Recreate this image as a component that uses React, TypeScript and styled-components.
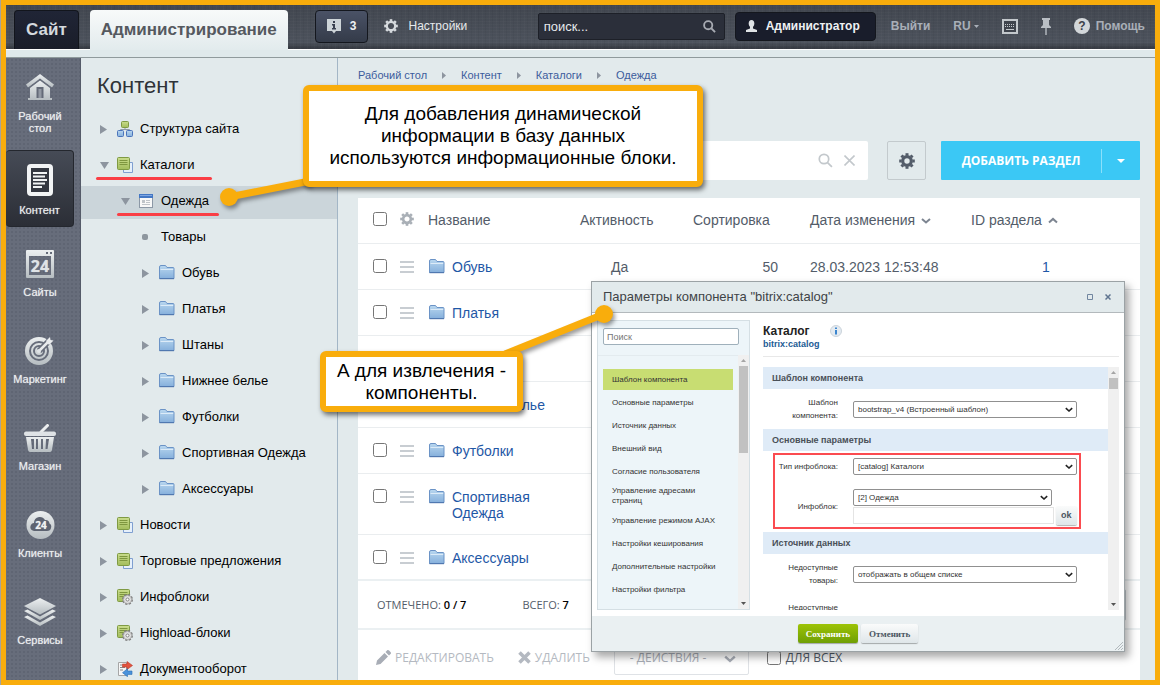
import React from "react";
import styled, { createGlobalStyle, css } from "styled-components";

const orange = "#f9ad0c";

const GlobalStyle = createGlobalStyle`
  * { box-sizing: border-box; }
  body { margin: 0; font-family: "Liberation Sans", Arial, sans-serif; color: #000; }
  button, input, select { font-family: inherit; margin: 0; }
  a { text-decoration: none; color: inherit; }
  ul { list-style: none; margin: 0; padding: 0; }
  svg { display: block; flex: none; }
`;

const Screen = styled.div`
  border-left: 1px solid #a7a49b;
`;

const Frame = styled.div`
  position: relative;
  display: flex;
  flex-direction: column;
  height: 100vh;
  overflow: hidden;
  border: 5px solid ${orange};
  background: #e2eaec;
`;

/* ---------- top bar ---------- */

const TopBar = styled.header`
  display: flex;
  align-items: center;
  flex: none;
  height: 44px;
  padding: 0 10px 2px 8px;
  font-size: 12px;
  color: #e6e9ec;
  background:
    repeating-linear-gradient(90deg, rgba(255, 255, 255, 0.02) 0 1px, transparent 1px 3px, rgba(0, 0, 0, 0.04) 3px 4px, transparent 4px 7px),
    repeating-linear-gradient(0deg, rgba(255, 255, 255, 0.02) 0 1px, transparent 1px 3px),
    linear-gradient(#41464f, #4c525c 85%, #33373f);
`;

const Tab = styled.a<{ $active?: boolean }>`
  position: relative;
  z-index: 1;
  display: flex;
  align-items: center;
  justify-content: center;
  align-self: flex-end;
  height: 39px;
  padding: 0 11px;
  font-size: 17px;
  font-weight: bold;
  border-radius: 4px 4px 0 0;
  margin-bottom: -2px;
  ${(p) =>
    p.$active
      ? css`
          height: 40px;
          margin-bottom: -3px;
          margin-left: 11px;
          margin-right: 27px;
          color: #55595f;
          background: linear-gradient(#f8fafa, #e2ebed);
        `
      : css`
          color: #d5dade;
          border: 1px solid #12151c;
          border-bottom: 0;
          background: linear-gradient(#202536, #1a1d29);
        `}
`;

const BarButton = styled.button<{ $dark?: boolean }>`
  display: flex;
  align-items: center;
  justify-content: center;
  gap: 9px;
  height: ${(p) => (p.$dark ? 29 : 33)}px;
  padding: 0 ${(p) => (p.$dark ? 15 : 11)}px 0 ${(p) => (p.$dark ? 10 : 11)}px;
  font-size: 12px;
  font-weight: bold;
  color: #eef1f3;
  border: 1px solid #14171e;
  border-radius: 4px;
  background: ${(p) => (p.$dark ? "#191d2b" : "linear-gradient(#4a5266, #343b49)")};
`;

const BarLink = styled.a<{ $strong?: boolean; $gap?: number }>`
  display: flex;
  align-items: center;
  gap: ${(p) => p.$gap || 0}px;
  font-weight: ${(p) => (p.$strong ? "bold" : "normal")};
  color: ${(p) => (p.$strong ? "#a9afb8" : "#e6e9ec")};
`;

const SettingsLink = styled(BarLink)`
  margin-left: 16px;
  margin-right: auto;
`;

const GlobalSearch = styled.label`
  display: flex;
  align-items: center;
  width: 187px;
  height: 27px;
  margin-right: 10px;
  padding: 0 8px 0 5px;
  border: 1px solid #1d2028;
  border-radius: 2px;
  background: #2b2f3a;
  input {
    flex: 1;
    min-width: 0;
    padding: 0;
    border: 0;
    outline: 0;
    background: none;
    font-size: 13px;
    color: #e6e9ec;
  }
  input::placeholder { color: #e6e9ec; opacity: 1; }
`;

const BarTools = styled.nav`
  display: flex;
  align-items: center;
  gap: 23px;
  margin-left: 15px;
`;

const Strip = styled.div`
  flex: none;
  height: 9px;
  border-top: 1px solid #fff;
  border-bottom: 1px solid #8f9a9c;
  background: #dfe9eb;
`;

/* ---------- page body ---------- */

const Body = styled.div`
  display: flex;
  flex: 1;
  min-height: 0;
`;

const Rail = styled.nav`
  display: flex;
  flex-direction: column;
  gap: 9px;
  flex: none;
  width: 75px;
  padding: 2px 6px 0 0;
  border-right: 1px solid #555b69;
  background-color: #676d7b;
  background-image: radial-gradient(#5f6573 1px, transparent 1px);
  background-size: 4px 4px;
`;

const RailItem = styled.a<{ $active?: boolean }>`
  display: flex;
  flex-direction: column;
  align-items: center;
  flex: none;
  gap: 8px;
  min-height: 78px;
  padding-top: 14px;
  font-size: 11px;
  line-height: 12px;
  text-align: center;
  color: #eceef0;
  text-shadow: 0 0 1px rgba(255, 255, 255, 0.6);
  &:first-child { min-height: 81px; padding: 14px 14px 2px; }
  ${(p) =>
    p.$active &&
    css`
      min-height: 77px;
      border: 1px solid #24272e;
      border-left: 0;
      border-radius: 4px;
      padding-top: 13px;
      background: linear-gradient(#464b56, #2b2e36);
    `}
`;

const TreePanel = styled.aside`
  flex: none;
  width: 257px;
  border-right: 1px solid #a3b6c6;
`;

const TreeTitle = styled.h1`
  margin: 0;
  padding: 15px 16px 12px;
  font-size: 22px;
  line-height: 26px;
  font-weight: normal;
  color: #2f3338;
`;

const TreeRow = styled.li<{ $level: number; $active?: boolean }>`
  position: relative;
  display: flex;
  align-items: center;
  height: 33px;
  margin-top: 3px;
  padding-left: ${(p) => 19 + 21 * p.$level}px;
  padding-bottom: 5px;
  font-size: 13px;
  background: ${(p) => (p.$active ? "#cbd5da" : "none")};
`;

const TreeToggle = styled.span<{ $bullet?: boolean }>`
  display: flex;
  width: 7px;
  margin-right: ${(p) => (p.$bullet ? 12 : 10)}px;
  padding-top: 2px;
`;

const TreeIcon = styled.span`
  display: flex;
  width: 16px;
  margin-right: 7px;
  padding-top: 1px;
`;

const Underline = styled.span<{ $left: number; $width: number }>`
  position: absolute;
  left: ${(p) => p.$left}px;
  bottom: 3px;
  width: ${(p) => p.$width}px;
  height: 3px;
  border-radius: 2px;
  background: #fa3e45;
`;

const Main = styled.main`
  flex: 1;
  min-width: 0;
  padding: 0 15px 0 20px;
`;

const Crumbs = styled.nav`
  display: flex;
  align-items: center;
  gap: 15px;
  padding: 11px 0 0;
  font-size: 11px;
  line-height: 13px;
  color: #3c5c9c;
`;

const Toolbar = styled.div`
  display: flex;
  height: 39px;
  margin: 59px 0 18px;
`;

const Filter = styled.label`
  display: flex;
  align-items: center;
  gap: 11px;
  flex: 1;
  min-width: 0;
  padding-right: 13px;
  border-radius: 2px;
  background: #fff;
  input {
    flex: 1;
    min-width: 0;
    border: 0;
    outline: 0;
    background: none;
  }
`;

const GearButton = styled.button`
  display: flex;
  align-items: center;
  justify-content: center;
  width: 39px;
  margin: 0 15px 0 19px;
  padding: 0;
  border: 1px solid #c3cacd;
  border-radius: 2px;
  background: none;
`;

const AddGroup = styled.div`
  display: flex;
  align-items: center;
  width: 199px;
  border-radius: 1px;
  background: #3bc8f5;
`;

const AddButton = styled.button<{ $narrow?: boolean }>`
  display: flex;
  align-items: center;
  justify-content: center;
  flex: ${(p) => (p.$narrow ? "0 0 39px" : 1)};
  height: 24px;
  padding: 0;
  border: 0;
  border-left: ${(p) => (p.$narrow ? "1px solid #8be0fa" : "0")};
  background: none;
  font: bold 12px "Open Sans", sans-serif;
  color: #fff;
  white-space: nowrap;
`;

const Grid = styled.section`
  background: #fff;
  min-height: 100%;
`;

const Table = styled.table`
  width: 100%;
  table-layout: fixed;
  border-collapse: collapse;
  font-size: 14px;
  line-height: 16px;
  color: #535c69;
  th, td {
    height: 46px;
    padding: 0;
    text-align: left;
    font-weight: normal;
    vertical-align: top;
    border-bottom: 1px solid #eaedef;
  }
  th { height: 45px; }
  tbody tr:last-child td { border-bottom: 2px solid #ebf0f2; }
`;

const Cell = styled.div<{ $left?: number; $right?: boolean }>`
  display: flex;
  align-items: flex-start;
  justify-content: ${(p) => (p.$right ? "flex-end" : "flex-start")};
  gap: 6px;
  padding: 15px 0 13px ${(p) => p.$left || 0}px;
  padding-right: ${(p) => (p.$right ? 32 : 0)}px;
  white-space: nowrap;
`;

const HeadCell = styled(Cell)`
  align-items: center;
  padding-top: 14px;
  padding-bottom: 12px;
`;

const CellLink = styled.a`
  color: #1f58a6;
`;

const NameLink = styled(CellLink)`
  display: flex;
  gap: 7px;
  padding-left: 1px;
  white-space: normal;
`;

const Check = styled.input`
  width: 14px;
  height: 14px;
  margin: 0;
  flex: none;
`;

const Handle = styled.span`
  width: 14px;
  height: 12px;
  margin-top: 2px;
  border-top: 2px solid #c8cdd2;
  border-bottom: 2px solid #c8cdd2;
  background: linear-gradient(transparent 3px, #c8cdd2 3px 5px, transparent 5px);
`;

const Summary = styled.div`
  display: flex;
  align-items: center;
  gap: 56px;
  height: 49px;
  padding: 0 14px 0 19px;
  border-bottom: 2px solid #ebf0f2;
  font: 11px "Open Sans", sans-serif;
  color: #535c69;
  b { font-weight: 600; color: #000; }
`;

const PageSize = styled.select`
  width: 60px;
  height: 32px;
  margin-left: auto;
  border: 1px solid #c6cdd3;
  border-radius: 2px;
  background: #fff;
`;

const Actions = styled.div`
  display: flex;
  align-items: center;
  height: 55px;
  padding-left: 18px;
  font: 12px "Open Sans", sans-serif;
  color: #535c69;
`;

const ActionButton = styled.button`
  display: flex;
  align-items: center;
  gap: 4px;
  margin-right: 24px;
  padding: 0;
  border: 0;
  background: none;
  font: inherit;
  color: #b4b9c1;
`;

const ActionSelect = styled.span`
  display: flex;
  align-items: center;
  width: 135px;
  height: 34px;
  margin-right: 18px;
  padding: 0 12px 0 15px;
  border: 1px solid #dfe2e6;
  border-radius: 2px;
  select {
    flex: 1;
    appearance: none;
    padding: 0;
    border: 0;
    background: none;
    font: 12px "Open Sans", sans-serif;
    color: #a8adb6;
  }
`;

const AllLabel = styled.label`
  display: flex;
  align-items: center;
  gap: 5px;
`;

/* ---------- component dialog ---------- */

const Dialog = styled.section`
  position: absolute;
  left: 585px;
  top: 276px;
  display: flex;
  flex-direction: column;
  width: 534px;
  height: 371px;
  border: 1px solid #9ba2a5;
  background: #fff;
  box-shadow: 4px 5px 8px rgba(0, 0, 0, 0.35);
  font-size: 8px;
  color: #333;
`;

const DialogHead = styled.header`
  display: flex;
  align-items: center;
  gap: 12px;
  height: 31px;
  padding: 0 13px 2px 11px;
  border-bottom: 1px solid #b3b9bc;
  background: #e2eaec;
  h2 {
    flex: 1;
    margin: 0;
    font-size: 13px;
    font-weight: normal;
    color: #3f4447;
  }
  button {
    padding: 2px 0 0;
    border: 0;
    background: none;
  }
`;

const DialogBody = styled.div`
  display: flex;
  gap: 13px;
  flex: 1;
  min-height: 0;
  padding: 7px 5px 6px;
`;

const Side = styled.div`
  display: flex;
  flex-direction: column;
  width: 153px;
  border: 1px solid #d5dfe4;
  background: #edf5f9;
`;

const SideSearch = styled.input`
  width: 136px;
  height: 17px;
  margin: 7px 5px 10px;
  padding: 0 3px;
  border: 1px solid #9fb0bb;
  border-radius: 2px;
  background: #fff;
  font-size: 9px;
`;

const Scroller = styled.div`
  display: flex;
  flex: 1;
  min-height: 0;
`;

const Clip = styled.div`
  flex: 1;
  min-width: 0;
  overflow: hidden;
`;

const SideList = styled.ul`
  flex: 1;
  overflow: hidden;
  padding: 13px 5px 0 5px;
  border-top: 1px solid #e3ebef;
`;

const SideItem = styled.li<{ $active?: boolean }>`
  display: flex;
  align-items: center;
  min-height: 21px;
  margin: 0 0 2px;
  padding: 2px 12px 2px 9px;
  line-height: 10px;
  background: ${(p) => (p.$active ? "#c8dd72" : "none")};
`;

const ScrollTrack = styled.div<{ $thumb: number }>`
  display: flex;
  flex-direction: column;
  align-items: center;
  gap: 4px;
  width: 11px;
  padding: 4px 0;
  background: #f0f0f0;
  i {
    width: 9px;
    height: ${(p) => p.$thumb}px;
    background: #c1c1c1;
  }
  svg:last-child { margin-top: auto; }
`;

const Form = styled.div`
  display: flex;
  flex-direction: column;
  flex: 1;
  min-width: 0;
`;

const FormHead = styled.div`
  height: 37px;
  margin-bottom: 10px;
  padding-top: 4px;
  border-bottom: 1px solid #e8e8e8;
  div {
    display: flex;
    align-items: center;
    gap: 20px;
  }
  h3 {
    margin: 0;
    font-size: 12px;
    line-height: 14px;
    color: #222;
  }
  a {
    display: block;
    font-size: 9px;
    line-height: 12px;
    font-weight: bold;
    color: #1b5b95;
  }
`;

const FormSection = styled.h4`
  margin: 0;
  padding-left: 9px;
  font-size: 9px;
  line-height: 22px;
  color: #4a5058;
  background: #dfebf7;
`;

const Field = styled.div<{ $height: number }>`
  display: grid;
  grid-template-columns: 75px 1fr;
  column-gap: 15px;
  align-items: center;
  height: ${(p) => p.$height}px;
  label {
    justify-self: end;
    text-align: right;
    line-height: 13px;
  }
`;

const SelectBox = styled.span<{ $short?: boolean }>`
  display: flex;
  align-items: center;
  width: ${(p) => (p.$short ? 199 : 224)}px;
  height: 17px;
  padding: 0 3px 0 4px;
  border: 1px solid #909090;
  border-radius: 2px;
  select {
    flex: 1;
    appearance: none;
    padding: 0;
    border: 0;
    background: none;
    font-size: 8px;
    color: #333;
  }
`;

const Marked = styled.div`
  position: relative;
`;

const RedFrame = styled.span`
  position: absolute;
  inset: 2px 27px 3px 10px;
  border: 2px solid #fb4b50;
  pointer-events: none;
`;

const CodeRow = styled.div`
  display: flex;
  align-items: center;
  gap: 2px;
  height: 19px;
  input {
    width: 201px;
    height: 17px;
    border: 1px solid #e4e4e4;
    background: #fff;
  }
`;

const SmallButton = styled.button<{ $kind?: "save" | "cancel" }>`
  height: 19px;
  padding: 0 ${(p) => (p.$kind ? 8 : 5)}px;
  border: 0;
  border-radius: 2px;
  box-shadow: 0 1px 1px rgba(0, 0, 0, 0.3);
  font-family: ${(p) => (p.$kind ? '"Liberation Serif", serif' : "inherit")};
  font-size: 9px;
  font-weight: bold;
  color: ${(p) => (p.$kind === "save" ? "#fff" : "#4a5560")};
  background: ${(p) => (p.$kind === "save" ? "linear-gradient(#9dc306, #6f9f04)" : "linear-gradient(#fafbfb, #dfe6e9)")};
`;

const DialogFoot = styled.footer`
  position: relative;
  display: flex;
  align-items: center;
  justify-content: center;
  gap: 3px;
  height: 35px;
  background: #eaf0f2;
  > svg {
    position: absolute;
    right: 1px;
    bottom: 1px;
  }
`;

/* ---------- annotations ---------- */

const Connector = styled.svg`
  position: absolute;
  left: 0;
  top: 0;
  filter: drop-shadow(2px 3px 2px rgba(0, 0, 0, 0.4));
  pointer-events: none;
`;

const Callout = styled.p<{ $x: number; $y: number; $w: number; $h: number }>`
  position: absolute;
  left: ${(p) => p.$x}px;
  top: ${(p) => p.$y}px;
  display: flex;
  align-items: center;
  justify-content: center;
  width: ${(p) => p.$w}px;
  height: ${(p) => p.$h}px;
  margin: 0;
  border: 6px solid ${orange};
  border-radius: 6px;
  background: #fff;
  box-shadow: 2px 3px 5px rgba(0, 0, 0, 0.55);
  font-size: 19px;
  line-height: 22px;
  text-align: center;
  white-space: nowrap;
`;

/* ---------- drawings ---------- */

const HiddenDefs = styled.svg`
  position: absolute;
`;

const Gradients = () => (
  <HiddenDefs width="0" height="0" aria-hidden>
    <defs>
      <linearGradient id="silver" x1="0" y1="0" x2="0" y2="1">
        <stop offset="0" stopColor="#eceff0" />
        <stop offset="1" stopColor="#b6bdc1" />
      </linearGradient>
      <linearGradient id="blue" x1="0" y1="0" x2="0" y2="1">
        <stop offset="0" stopColor="#b9d7ef" />
        <stop offset="1" stopColor="#86b0dc" />
      </linearGradient>
      <linearGradient id="green" x1="0" y1="0" x2="0" y2="1">
        <stop offset="0" stopColor="#c9dc8c" />
        <stop offset="1" stopColor="#a3bd5c" />
      </linearGradient>
    </defs>
  </HiddenDefs>
);

const GearRing = ({ size, color, r = 4.4, stroke = 3 }: { size: number; color: string; r?: number; stroke?: number }) => (
  <svg width={size} height={size} viewBox="-8 -8 16 16" fill="none" stroke={color}>
    <circle r={r} strokeWidth={stroke} />
    {[0, 45, 90, 135, 180, 225, 270, 315].map((a) => (
      <path key={a} d="M0 -5.4V-7.8" strokeWidth="3" transform={`rotate(${a})`} />
    ))}
  </svg>
);

const Magnifier = ({ size, color, stroke = 2 }: { size: number; color: string; stroke?: number }) => (
  <svg width={size} height={size} viewBox="0 0 14 14" fill="none" stroke={color} strokeWidth={stroke}>
    <circle cx="5.6" cy="5.6" r="4.4" />
    <path d="M8.9 8.9L13 13" />
  </svg>
);

const Chevron = ({ up, size = 10, color = "#7d8591", stroke = 2 }: { up?: boolean; size?: number; color?: string; stroke?: number }) => (
  <svg width={size} height={size} viewBox="0 0 10 10" fill="none" stroke={color} strokeWidth={stroke}>
    <path d={up ? "M1 7.5L5 3.9L9 7.5" : "M1 3.9L5 7.5L9 3.9"} />
  </svg>
);

const Triangle = ({ dir, w, h, color }: { dir: "right" | "down" | "up"; w: number; h: number; color: string }) => (
  <svg width={w} height={h} viewBox="0 0 10 10" preserveAspectRatio="none">
    <path fill={color} d={dir === "right" ? "M0 0L10 5L0 10Z" : dir === "down" ? "M0 0H10L5 10Z" : "M0 10H10L5 0Z"} />
  </svg>
);

const Folder = () => (
  <svg width="16" height="15" viewBox="0 0 16 15">
    <path d="M.5 13.5V2Q.5 .5 2 .5H6.5L8 2.5H14Q15 2.5 15 3.5V13.5Z" fill="url(#blue)" stroke="#6b93c6" />
    <path d="M1.5 4.5H14.2" stroke="#dcebf8" />
    <path d="M.5 13.7H15" stroke="#4b72ac" />
  </svg>
);

const Sheets = ({ gear }: { gear?: boolean }) => (
  <svg width="16" height="16" viewBox="0 0 16 16">
    {!gear && <path d="M6.5 5.5H15.5V15.5H6.5Z" fill="#e6f0fb" stroke="#7f9fd0" />}
    <rect x=".5" y=".5" width="12" height="12" rx="1" fill="url(#green)" stroke="#7f9a43" />
    <path d="M2.5 3.5H10.5M2.5 5.5H10.5M2.5 7.5H10.5" stroke="#7e963f" />
    {gear && (
      <g transform="translate(10.5 10.5)">
        <circle r="4.5" fill="#dcdcdc" stroke="#7e7e7e" strokeWidth="2" strokeDasharray="2.2 1.3" />
        <circle r="4" fill="#e2e2e2" stroke="#9a9a9a" strokeWidth=".6" />
        <circle r="1.5" fill="#fff" stroke="#858585" />
      </g>
    )}
  </svg>
);

const SiteMap = () => (
  <svg width="16" height="16" viewBox="0 0 16 16">
    <path d="M8 6V9M3.5 10V8.5H12.5V10" fill="none" stroke="#8f9aa5" />
    <rect x="4.5" y=".5" width="7" height="6" rx="1" fill="url(#green)" stroke="#7f9a43" />
    <rect x=".5" y="9.5" width="6" height="6" rx="1" fill="url(#blue)" stroke="#4b74bb" />
    <rect x="9.5" y="9.5" width="6" height="6" rx="1" fill="url(#blue)" stroke="#4b74bb" />
  </svg>
);

const Card = () => (
  <svg width="16" height="14" viewBox="0 0 16 14">
    <rect x="1.5" y=".5" width="13" height="13" fill="#f8f8f8" stroke="#8c98a6" />
    <path d="M1 0H15V4H1Z" fill="#4377c4" />
    <path d="M2 1.5H14" stroke="#7fa6e2" />
    <path d="M4 6H7V9H4ZM8 6H12V7H8ZM8 8H12V9H8ZM4 10H12V11H4Z" fill="#bfc4c9" />
  </svg>
);

const DocFlow = () => (
  <svg width="16" height="16" viewBox="0 0 16 16">
    <path d="M1.5 1.5H9.5V14.5H1.5Z" fill="#f7f7f7" stroke="#a6a6a6" />
    <path d="M3 4H5M3 6.5H8M3 9H6" stroke="#888" />
    <path d="M5.5 3H10V.5L15.5 4.5L10 8.5V6H5.5Z" fill="#e2543f" stroke="#b93b2b" strokeWidth=".6" />
    <path d="M15 10H10.5V7.8L5.5 11.7L10.5 15.7V13.4H15Z" fill="#4b93dc" stroke="#2c6db2" strokeWidth=".6" />
  </svg>
);

const railIcons: Record<string, React.ReactNode> = {
  home: (
    <svg width="28" height="28" viewBox="0 0 28 28" fill="url(#silver)">
      <path d="M14 0L28 10.5L26 13.5L14 4.5L2 13.5L0 10.5Z" />
      <path fillRule="evenodd" d="M14 6.5L24 14V24H26V26H2V24H4V14ZM11.5 14V24H16.5V14Z" />
      <path d="M10.5 13H17.5V24H10.5Z" fill="#646a78" />
      <path d="M12.5 15H15.5V24H12.5Z" fill="#9298a3" />
    </svg>
  ),
  page: (
    <svg width="26" height="32" viewBox="0 0 26 32">
      <rect x="2" y="2" width="22" height="28" rx="2" fill="#343841" stroke="#f2f4f5" strokeWidth="4" />
      <path d="M6 9H20M6 12.5H18M6 16H20M6 19.5H18M6 23H15" stroke="#f2f4f5" strokeWidth="1.8" />
    </svg>
  ),
  sites: (
    <svg width="28" height="28" viewBox="0 0 28 28">
      <path fillRule="evenodd" fill="url(#silver)" d="M1 0H27Q28 0 28 1V27Q28 28 27 28H1Q0 28 0 27V1Q0 0 1 0ZM3 6V25H25V6ZM20 2V4H22V2ZM24 2V4H26V2Z" />
      <text x="14" y="22" textAnchor="middle" fontFamily="Open Sans, sans-serif" fontWeight="bold" fontSize="16" fill="#dfe3e6">24</text>
    </svg>
  ),
  target: (
    <svg width="30" height="28" viewBox="0 0 30 28">
      <circle cx="14" cy="14" r="14" fill="url(#silver)" />
      <circle cx="14" cy="14" r="9" fill="none" stroke="#676d7b" strokeWidth="2" />
      <circle cx="14" cy="14" r="5" fill="none" stroke="#676d7b" strokeWidth="2" />
      <path d="M14 14L27 1" stroke="#676d7b" strokeWidth="6" />
      <path d="M14 14L25 3" stroke="#e9ebed" strokeWidth="2.5" />
      <path d="M21 4L25 0L25.5 3L28.5 3.5L24 8Z" fill="#e9ebed" />
      <circle cx="14" cy="14" r="2" fill="#e0e3e6" />
    </svg>
  ),
  basket: (
    <svg width="32" height="28" viewBox="0 0 32 28">
      <path d="M23.5 1.5L17 8" stroke="#eceeef" strokeWidth="3" strokeLinecap="round" />
      <rect y="7.5" width="32" height="4.5" rx="2" fill="#dfe3e6" />
      <path fillRule="evenodd" fill="url(#silver)" d="M2 13H30L28 26Q27.5 28 26 28H6Q4.5 28 4 26ZM7 15L8 25H10V15ZM12 15V25H14V15ZM17 15V25H19V15ZM22 15L21.5 25H23.5L25 15Z" />
    </svg>
  ),
  cloud: (
    <svg width="29" height="28" viewBox="0 0 29 28">
      <circle cx="14.5" cy="14" r="14" fill="url(#silver)" />
      <path d="M8 20Q3.5 19 4.5 15Q5.5 12 8 12Q8 7 13 6Q17 5.5 19 9Q23 8.5 23.5 12.5Q26 14 25 17Q24.5 20 21 20Z" fill="#5d6371" />
      <text x="15" y="18" textAnchor="middle" fontFamily="Open Sans, sans-serif" fontWeight="bold" fontSize="10" fill="#f1f3f4">24</text>
    </svg>
  ),
  layers: (
    <svg width="32" height="28" viewBox="0 0 32 28" fill="url(#silver)">
      <path d="M16 0L32 8L16 16.5L0 8Z" />
      <path d="M0 13L3.5 11.5L16 18.5L28.5 11.5L32 13L16 22Z" />
      <path d="M0 19L3.5 17.5L16 24.5L28.5 17.5L32 19L16 28Z" />
    </svg>
  ),
};

/* ---------- data ---------- */

const rail = [
  { icon: "home", label: "Рабочий стол" },
  { icon: "page", label: "Контент", active: true },
  { icon: "sites", label: "Сайты" },
  { icon: "target", label: "Маркетинг" },
  { icon: "basket", label: "Магазин" },
  { icon: "cloud", label: "Клиенты" },
  { icon: "layers", label: "Сервисы" },
];

type Node = { label: string; level: number; icon?: React.ReactNode; open?: boolean; active?: boolean; line?: [number, number] };
const tree: Node[] = [
  { label: "Структура сайта", level: 0, icon: <SiteMap /> },
  { label: "Каталоги", level: 0, icon: <Sheets />, open: true, line: [15, 116] },
  { label: "Одежда", level: 1, icon: <Card />, open: true, active: true, line: [36, 102] },
  { label: "Товары", level: 2 },
  { label: "Обувь", level: 2, icon: <Folder /> },
  { label: "Платья", level: 2, icon: <Folder /> },
  { label: "Штаны", level: 2, icon: <Folder /> },
  { label: "Нижнее белье", level: 2, icon: <Folder /> },
  { label: "Футболки", level: 2, icon: <Folder /> },
  { label: "Спортивная Одежда", level: 2, icon: <Folder /> },
  { label: "Аксессуары", level: 2, icon: <Folder /> },
  { label: "Новости", level: 0, icon: <Sheets /> },
  { label: "Торговые предложения", level: 0, icon: <Sheets /> },
  { label: "Инфоблоки", level: 0, icon: <Sheets gear /> },
  { label: "Highload-блоки", level: 0, icon: <Sheets gear /> },
  { label: "Документооборот", level: 0, icon: <DocFlow /> },
];

const rows = ["Обувь", "Платья", "Штаны", "Нижнее белье", "Футболки", "Спортивная Одежда", "Аксессуары"];

const sideItems = [
  "Шаблон компонента",
  "Основные параметры",
  "Источник данных",
  "Внешний вид",
  "Согласие пользователя",
  "Управление адресами страниц",
  "Управление режимом AJAX",
  "Настройки кеширования",
  "Дополнительные настройки",
  "Настройки фильтра",
  "Настройки действий",
];

const FormSelect = ({ id, value, short }: { id: string; value: string; short?: boolean }) => (
  <SelectBox $short={short}>
    <select id={id}>
      <option>{value}</option>
    </select>
    <Chevron size={8} color="#222" />
  </SelectBox>
);

export default function App() {
  return (
    <Screen>
      <GlobalStyle />
      <Gradients />
      <Frame>
        <TopBar>
          <Tab href="#site">Сайт</Tab>
          <Tab href="#admin" $active>Администрирование</Tab>
          <BarButton>
            <svg width="14" height="15" viewBox="0 0 14 15">
              <path d="M0 0H14V12H9L7 14.5L5 12H0Z" fill="#cdd4d8" />
              <path d="M6 2H8V4H6ZM5 5H8V9H9V10.5H5V9H6V6.5H5Z" fill="#3a4150" />
            </svg>
            3
          </BarButton>
          <SettingsLink href="#settings" $gap={10}>
            <GearRing size={14} color="#d6dade" r={4.8} stroke={2.6} />
            Настройки
          </SettingsLink>
          <GlobalSearch>
            <input type="text" placeholder="поиск..." aria-label="Поиск" />
            <Magnifier size={13} color="#a7abb2" />
          </GlobalSearch>
          <BarButton $dark>
            <svg width="11" height="12" viewBox="0 0 11 12" fill="#dfe3e6">
              <ellipse cx="5.5" cy="3.5" rx="2.8" ry="3.5" />
              <path d="M4 6H7V8.5L11 10V12H0V10L4 8.5Z" />
            </svg>
            Администратор
          </BarButton>
          <BarTools>
            <BarLink $strong href="#logout">Выйти</BarLink>
            <BarLink $strong $gap={3} href="#lang">
              RU
              <Triangle dir="down" w={5} h={3} color="#a9afb8" />
            </BarLink>
            <svg width="16" height="15" viewBox="0 0 16 15" shapeRendering="crispEdges">
              <rect x="1" y="1" width="14" height="13" fill="#3f444d" stroke="#c3c8cc" strokeWidth="2" />
              <path d="M3 5.5H13M3 7.5H13" stroke="#c3c8cc" strokeDasharray="1 1" />
              <path d="M4 10.5H12" stroke="#c3c8cc" />
            </svg>
            <svg width="10" height="17" viewBox="0 0 10 17" fill="#b9bec4">
              <path d="M1 0H9V2H8V7L10 9V10H5.7V17H4.3V10H0V9L2 7V2H1Z" />
            </svg>
            <BarLink $strong $gap={6} href="#help">
              <svg width="16" height="16" viewBox="0 0 16 16">
                <circle cx="8" cy="8" r="8" fill="#d3d7da" />
                <text x="8" y="12" textAnchor="middle" fontSize="12" fontWeight="bold" fill="#3b4049">?</text>
              </svg>
              Помощь
            </BarLink>
          </BarTools>
        </TopBar>
        <Strip />

        <Body>
          <Rail>
            {rail.map((r) => (
              <RailItem key={r.label} href={"#" + r.icon} $active={r.active}>
                {railIcons[r.icon]}
                <span>{r.label}</span>
              </RailItem>
            ))}
          </Rail>

          <TreePanel>
            <TreeTitle>Контент</TreeTitle>
            <ul>
              {tree.map((n) => (
                <TreeRow key={n.label} $level={n.level} $active={n.active}>
                  <TreeToggle $bullet={!n.icon}>
                    {!n.icon ? (
                      <svg width="6" height="6"><rect width="6" height="6" rx="2" fill="#8e979f" /></svg>
                    ) : n.open ? (
                      <Triangle dir="down" w={9} h={7} color="#8d959f" />
                    ) : (
                      <Triangle dir="right" w={7} h={9} color="#8d959f" />
                    )}
                  </TreeToggle>
                  {n.icon && <TreeIcon>{n.icon}</TreeIcon>}
                  <a href="#section">{n.label}</a>
                  {n.line && <Underline $left={n.line[0]} $width={n.line[1]} />}
                </TreeRow>
              ))}
            </ul>
          </TreePanel>

          <Main>
            <Crumbs>
              {["Рабочий стол", "Контент", "Каталоги", "Одежда"].map((c, i) => (
                <React.Fragment key={c}>
                  {i > 0 && <Triangle dir="right" w={4} h={7} color="#8d959f" />}
                  <a href="#crumb">{c}</a>
                </React.Fragment>
              ))}
            </Crumbs>

            <Toolbar>
              <Filter>
                <input type="text" aria-label="Фильтр" />
                <Magnifier size={15} color="#c3c8cc" stroke={1.6} />
                <svg width="11" height="11" viewBox="0 0 11 11" stroke="#c3c8cc" strokeWidth="1.6">
                  <path d="M.5 .5L10.5 10.5M10.5 .5L.5 10.5" />
                </svg>
              </Filter>
              <GearButton aria-label="Настройки списка">
                <GearRing size={16} color="#535c69" r={4.3} stroke={3.2} />
              </GearButton>
              <AddGroup>
                <AddButton>ДОБАВИТЬ РАЗДЕЛ</AddButton>
                <AddButton $narrow aria-label="Ещё">
                  <Triangle dir="down" w={8} h={4} color="#fff" />
                </AddButton>
              </AddGroup>
            </Toolbar>

            <Grid>
              <Table>
                <colgroup>
                  <col width="42" />
                  <col width="28" />
                  <col />
                  <col width="113" />
                  <col width="117" />
                  <col width="161" />
                  <col width="169" />
                </colgroup>
                <thead>
                  <tr>
                    <th><HeadCell $left={15}><Check type="checkbox" aria-label="Выбрать все" /></HeadCell></th>
                    <th><HeadCell><GearRing size={14} color="#a9afb6" /></HeadCell></th>
                    <th><HeadCell>Название</HeadCell></th>
                    <th><HeadCell>Активность</HeadCell></th>
                    <th><HeadCell>Сортировка</HeadCell></th>
                    <th><HeadCell>Дата изменения <Chevron size={10} /></HeadCell></th>
                    <th><HeadCell>ID раздела <Chevron up size={10} /></HeadCell></th>
                  </tr>
                </thead>
                <tbody>
                  {rows.map((name, i) => (
                    <tr key={name}>
                      <td><Cell $left={15}><Check type="checkbox" aria-label={name} /></Cell></td>
                      <td><Cell><Handle /></Cell></td>
                      <td>
                        <Cell>
                          <NameLink href="#row"><Folder />{name}</NameLink>
                        </Cell>
                      </td>
                      <td><Cell $left={31}>Да</Cell></td>
                      <td><Cell $right>50</Cell></td>
                      <td><Cell>28.03.2023 12:53:48</Cell></td>
                      <td><Cell $left={71}><CellLink href="#row">{i + 1}</CellLink></Cell></td>
                    </tr>
                  ))}
                </tbody>
              </Table>
              <Summary>
                <span>ОТМЕЧЕНО: <b>0 / 7</b></span>
                <span>ВСЕГО: <b>7</b></span>
                <PageSize aria-label="На странице"><option>20</option></PageSize>
              </Summary>
              <Actions>
                <ActionButton>
                  <svg width="15" height="15" viewBox="0 0 15 15" fill="#a8adb6">
                    <path d="M0 15L1 10.5L8.5 3L12 6.5L4.5 14ZM9.5 2L11.5 0Q12.5 -.3 14.5 2Q15.3 3 15 3.5L13 5.5Z" />
                  </svg>
                  РЕДАКТИРОВАТЬ
                </ActionButton>
                <ActionButton>
                  <svg width="13" height="13" viewBox="0 0 13 13" stroke="#b4b9c1" strokeWidth="3.6">
                    <path d="M1.5 1.5L11.5 11.5M11.5 1.5L1.5 11.5" />
                  </svg>
                  УДАЛИТЬ
                </ActionButton>
                <ActionSelect>
                  <select aria-label="Действия"><option>- ДЕЙСТВИЯ -</option></select>
                  <Chevron size={12} color="#a8adb6" />
                </ActionSelect>
                <AllLabel><Check type="checkbox" />ДЛЯ ВСЕХ</AllLabel>
              </Actions>
            </Grid>
          </Main>
        </Body>

        <Dialog aria-label="Параметры компонента">
          <DialogHead>
            <h2>Параметры компонента "bitrix:catalog"</h2>
            <button aria-label="Развернуть">
              <svg width="6" height="6" viewBox="0 0 6 6"><path d="M.5 .5H5.5V5.5H.5Z" fill="none" stroke="#7186a0" /></svg>
            </button>
            <button aria-label="Закрыть">
              <svg width="6" height="6" viewBox="0 0 6 6" stroke="#5f7590" strokeWidth="1.5"><path d="M.5 .5L5.5 5.5M5.5 .5L.5 5.5" /></svg>
            </button>
          </DialogHead>
          <DialogBody>
            <Side>
              <SideSearch type="text" placeholder="Поиск" aria-label="Поиск параметра" />
              <Scroller>
                <SideList>
                  {sideItems.map((s, i) => (
                    <SideItem key={s} $active={i === 0}>{s}</SideItem>
                  ))}
                </SideList>
                <ScrollTrack $thumb={87}>
                  <Triangle dir="up" w={5} h={3} color="#a5a5a5" />
                  <i />
                  <Triangle dir="down" w={5} h={3} color="#555" />
                </ScrollTrack>
              </Scroller>
            </Side>
            <Form>
              <FormHead>
                <div>
                  <h3>Каталог</h3>
                  <svg width="12" height="12" viewBox="0 0 12 12">
                    <circle cx="6" cy="6" r="5.5" fill="#e4ebf1" stroke="#cbd3da" />
                    <path d="M5 2.5H7V4H5ZM5 5H7V9.5H5Z" fill="#3c86cf" />
                  </svg>
                </div>
                <a href="#component">bitrix:catalog</a>
              </FormHead>
              <Scroller>
                <Clip>
                  <FormSection>Шаблон компонента</FormSection>
                  <Field $height={40}>
                    <label htmlFor="tpl">Шаблон компонента:</label>
                    <FormSelect id="tpl" value="bootstrap_v4 (Встроенный шаблон)" />
                  </Field>
                  <FormSection>Основные параметры</FormSection>
                  <Marked>
                    <Field $height={30}>
                      <label htmlFor="type">Тип инфоблока:</label>
                      <FormSelect id="type" value="[catalog] Каталоги" />
                    </Field>
                    <Field $height={51}>
                      <label htmlFor="block">Инфоблок:</label>
                      <div>
                        <FormSelect id="block" value="[2] Одежда" short />
                        <CodeRow>
                          <input type="text" aria-label="Код инфоблока" />
                          <SmallButton>ok</SmallButton>
                        </CodeRow>
                      </div>
                    </Field>
                    <RedFrame />
                  </Marked>
                  <FormSection>Источник данных</FormSection>
                  <Field $height={40}>
                    <label htmlFor="goods">Недоступные товары:</label>
                    <FormSelect id="goods" value="отображать в общем списке" />
                  </Field>
                  <Field $height={53}>
                    <label htmlFor="offers">Недоступные торговые предложения:</label>
                    <FormSelect id="offers" value="не отображать" />
                  </Field>
                </Clip>
                <ScrollTrack $thumb={11}>
                  <Triangle dir="up" w={5} h={3} color="#a5a5a5" />
                  <i />
                  <Triangle dir="down" w={5} h={3} color="#555" />
                </ScrollTrack>
              </Scroller>
            </Form>
          </DialogBody>
          <DialogFoot>
            <SmallButton $kind="save">Сохранить</SmallButton>
            <SmallButton $kind="cancel">Отменить</SmallButton>
            <svg width="8" height="8" viewBox="0 0 8 8" stroke="#a3abae" strokeWidth=".8">
              <path d="M0 8L8 0M3 8L8 3M6 8L8 6" />
            </svg>
          </DialogFoot>
        </Dialog>

        <Connector width="700" height="420" viewBox="6 5 700 420" stroke={orange} fill={orange}>
          <path d="M229 197L310 181" strokeWidth="7" />
          <circle cx="229" cy="197" r="9" stroke="none" />
          <path d="M604 314L505 354" strokeWidth="7" />
          <circle cx="604" cy="314" r="9" stroke="none" />
        </Connector>
        <Callout $x={297} $y={80} $w={400} $h={102}>
          Для добавления динамической
          <br />
          информации в базу данных
          <br />
          используются информационные блоки.
        </Callout>
        <Callout $x={314} $y={346} $w={203} $h={61}>
          А для извлечения -
          <br />
          компоненты.
        </Callout>
      </Frame>
    </Screen>
  );
}
